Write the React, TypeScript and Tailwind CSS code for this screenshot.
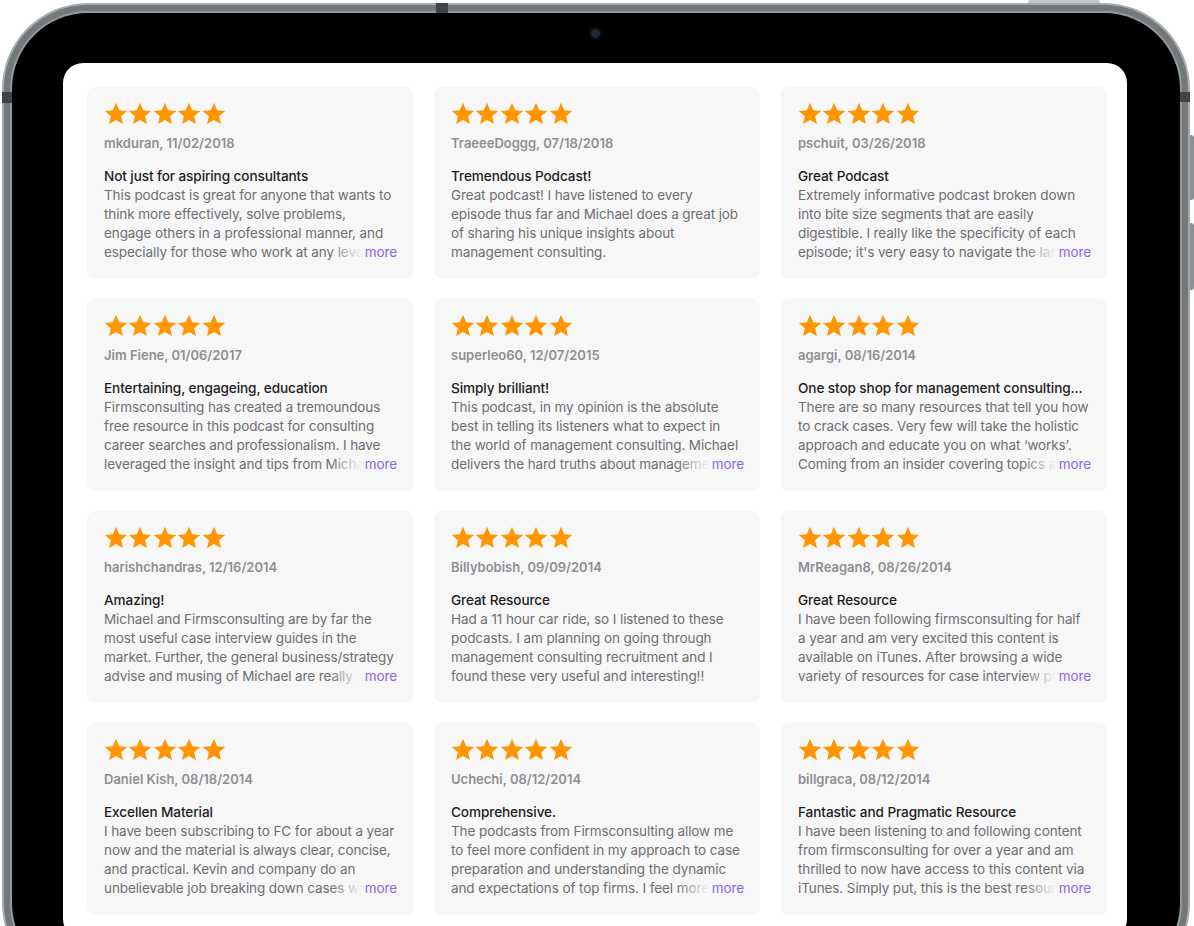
import React from "react";

type Review = {
  author: string;
  date: string;
  title: string;
  lines: string[];
  more?: boolean;
};

const reviews: Review[] = [
  {
    author: "mkduran",
    date: "11/02/2018",
    title: "Not just for aspiring consultants",
    lines: [
      "This podcast is great for anyone that wants to",
      "think more effectively, solve problems,",
      "engage others in a professional manner, and",
      "especially for those who work at any level in",
    ],
    more: true,
  },
  {
    author: "TraeeeDoggg",
    date: "07/18/2018",
    title: "Tremendous Podcast!",
    lines: [
      "Great podcast! I have listened to every",
      "episode thus far and Michael does a great job",
      "of sharing his unique insights about",
      "management consulting.",
    ],
  },
  {
    author: "pschuit",
    date: "03/26/2018",
    title: "Great Podcast",
    lines: [
      "Extremely informative podcast broken down",
      "into bite size segments that are easily",
      "digestible. I really like the specificity of each",
      "episode; it's very easy to navigate the large",
    ],
    more: true,
  },
  {
    author: "Jim Fiene",
    date: "01/06/2017",
    title: "Entertaining, engageing, education",
    lines: [
      "Firmsconsulting has created a tremoundous",
      "free resource in this podcast for consulting",
      "career searches and professionalism. I have",
      "leveraged the insight and tips from Michael",
    ],
    more: true,
  },
  {
    author: "superleo60",
    date: "12/07/2015",
    title: "Simply brilliant!",
    lines: [
      "This podcast, in my opinion is the absolute",
      "best in telling its listeners what to expect in",
      "the world of management consulting. Michael",
      "delivers the hard truths about management",
    ],
    more: true,
  },
  {
    author: "agargi",
    date: "08/16/2014",
    title: "One stop shop for management consulting...",
    lines: [
      "There are so many resources that tell you how",
      "to crack cases. Very few will take the holistic",
      "approach and educate you on what \u2018works\u2019.",
      "Coming from an insider covering topics a",
    ],
    more: true,
  },
  {
    author: "harishchandras",
    date: "12/16/2014",
    title: "Amazing!",
    lines: [
      "Michael and Firmsconsulting are by far the",
      "most useful case interview guides in the",
      "market. Further, the general business/strategy",
      "advise and musing of Michael are really",
    ],
    more: true,
  },
  {
    author: "Billybobish",
    date: "09/09/2014",
    title: "Great Resource",
    lines: [
      "Had a 11 hour car ride, so I listened to these",
      "podcasts. I am planning on going through",
      "management consulting recruitment and I",
      "found these very useful and interesting!!",
    ],
  },
  {
    author: "MrReagan8",
    date: "08/26/2014",
    title: "Great Resource",
    lines: [
      "I have been following firmsconsulting for half",
      "a year and am very excited this content is",
      "available on iTunes. After browsing a wide",
      "variety of resources for case interview prep",
    ],
    more: true,
  },
  {
    author: "Daniel Kish",
    date: "08/18/2014",
    title: "Excellen Material",
    lines: [
      "I have been subscribing to FC for about a year",
      "now and the material is always clear, concise,",
      "and practical. Kevin and company do an",
      "unbelievable job breaking down cases with",
    ],
    more: true,
  },
  {
    author: "Uchechi",
    date: "08/12/2014",
    title: "Comprehensive.",
    lines: [
      "The podcasts from Firmsconsulting allow me",
      "to feel more confident in my approach to case",
      "preparation and understanding the dynamic",
      "and expectations of top firms. I feel more",
    ],
    more: true,
  },
  {
    author: "billgraca",
    date: "08/12/2014",
    title: "Fantastic and Pragmatic Resource",
    lines: [
      "I have been listening to and following content",
      "from firmsconsulting for over a year and am",
      "thrilled to now have access to this content via",
      "iTunes. Simply put, this is the best resource",
    ],
    more: true,
  },
];

function Star() {
  return (
    <svg width="24" height="24" viewBox="0 0 24 24" className="shrink-0">
      <path
        d="M12 0.8l3.2 7.4 8 .7-6.1 5.3 1.85 7.85L12 17.9l-6.95 4.15 1.85-7.85L.8 8.9l8-.7z"
        fill="#ff9500"
      />
    </svg>
  );
}

function ReviewCard({ review }: { review: Review }) {
  const last = review.lines.length - 1;
  return (
    <div className="flex h-[192px] flex-col rounded-[8px] bg-[#f7f7f7] pl-[17px] pr-[16px] pt-[15px]">
      <div className="flex h-[24px] items-center gap-[0.4px]">
        {[0, 1, 2, 3, 4].map((i) => (
          <Star key={i} />
        ))}
      </div>
      <div className="mt-[8px] text-[13px] leading-[19px] font-semibold text-[#8e8e93]">
        {review.author}, {review.date}
      </div>
      <div className="mt-[14px] whitespace-nowrap text-[13.6px] leading-[19px] font-medium tracking-[-0.1px] text-[#1d1d1f]">
        {review.title}
      </div>
      <div className="text-[13.5px] leading-[19px] tracking-[-0.1px] text-[#6e6e73]">
        {review.lines.map((line, i) =>
          i === last && review.more ? (
            <div key={i} className="flex">
              <span className="relative min-w-0 flex-1 overflow-hidden whitespace-nowrap">
                {line}
                <span className="absolute right-0 top-0 h-full w-[32px] bg-linear-to-r from-[#f7f7f7]/0 to-[#f7f7f7]" />
              </span>
              <span className="pl-[3px] text-[#8c66e8]">more</span>
            </div>
          ) : (
            <div key={i} className="whitespace-nowrap">
              {line}
            </div>
          )
        )}
      </div>
    </div>
  );
}

export default function App() {
  return (
    <div
      className="relative h-[926px] w-[1194px] overflow-hidden bg-white"
      style={{ fontFamily: "Inter, 'Noto Sans', sans-serif" }}
    >
      {/* hardware buttons, tucked behind the rim */}
      <div className="absolute left-[1028px] top-0 h-[6px] w-[72px] rounded-t-[3px] bg-[#c3c5c7]" />
      <div className="absolute left-[1186px] top-[135px] h-[65px] w-[8px] rounded-r-[3px] bg-[#8d9194]" />
      <div className="absolute left-[1186px] top-[223px] h-[67px] w-[8px] rounded-r-[3px] bg-[#8d9194]" />

      <div className="relative ml-[2px] mt-[3px] w-[1188px] rounded-[86px] bg-[#a7aaac] p-[2px]">
        <div className="rounded-[84px] bg-[#73787b] p-[6px]">
          <div className="rounded-[78px] bg-[#969a9d] p-[2px]">
            <div className="relative rounded-[76px] bg-black pb-[40px] pl-[51px] pr-[53px] pt-[50px]">
              <div className="absolute left-[579px] top-[16px] h-[9px] w-[9px] rounded-full bg-[#1f2836] shadow-[0_0_3px_2px_#0c0f14]" />
              <div className="rounded-[20px] bg-white pb-[24px] pl-[24px] pr-[20px] pt-[24px]">
                <div className="grid grid-cols-[326px_326px_326px] gap-x-[21px] gap-y-[20px]">
                  {reviews.map((r, i) => (
                    <ReviewCard key={i} review={r} />
                  ))}
                </div>
              </div>
            </div>
          </div>
        </div>
        {/* antenna bands on the rim */}
        <div className="absolute left-0 top-[89px] h-[11px] w-[10px] bg-[#3f4446]" />
        <div className="absolute right-0 top-[89px] h-[10px] w-[10px] bg-[#3f4446]" />
        <div className="absolute left-[434px] top-0 h-[10px] w-[12px] bg-[#3f4446]" />
      </div>
    </div>
  );
}
